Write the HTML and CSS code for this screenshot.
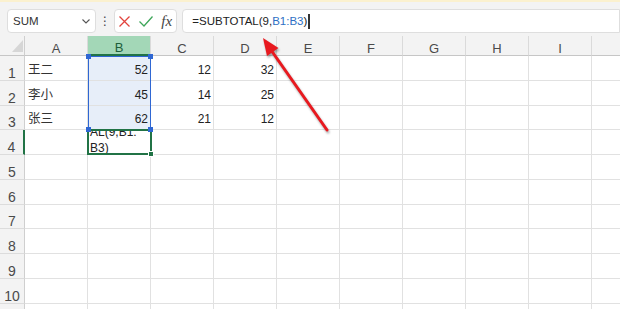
FILE: index.html
```html
<!DOCTYPE html>
<html lang="zh-CN">
<head>
    <meta charset="UTF-8">
    <meta name="viewport" content="width=device-width, initial-scale=1.0">
    <title>SUBTOTAL</title>
    <link rel="stylesheet" href="styles.css">
</head>
<body>

    <div class="app">
        <div class="notice"></div>

        <!-- 编辑栏 -->
        <div class="formula-bar">
            <div class="name-box">
                <span>SUM</span>
                <svg width="8" height="5" viewBox="0 0 8 5"><path d="M0.5 0.5 L4 4 L7.5 0.5" fill="none" stroke="#555" stroke-width="1.1"/></svg>
            </div>
            <div class="more">⋮</div>
            <div class="fx-box">
                <svg class="icon-cancel" width="11" height="11" viewBox="0 0 11 11"><path d="M0.5 0.5 L10.5 10.5 M10.5 0.5 L0.5 10.5" stroke="#e2433d" stroke-width="1.3"/></svg>
                <svg class="icon-ok" width="14" height="11" viewBox="0 0 14 11"><path d="M0.5 5.5 L5 10 L13.5 0.5" fill="none" stroke="#3ea65a" stroke-width="1.3"/></svg>
                <span class="fx">fx</span>
            </div>
            <div class="formula-input">=SUBTOTAL(9,<span class="ref">B1:B3</span>)<span class="caret"></span></div>
        </div>

        <!-- 工作表 -->
        <div class="sheet" id="sheet">
            <div class="corner">
                <svg width="11" height="12" viewBox="0 0 11 12"><polygon points="11,0 11,12 0,12" fill="#d6d6d6"/></svg>
            </div>
            <div class="range">
                <i class="handle tl"></i><i class="handle tr"></i>
                <i class="handle bl"></i><i class="handle br"></i>
            </div>
            <div class="active-cell">
                <div class="edit-text">AL(9,B1:<br>B3)</div>
                <i class="fill-handle"></i>
            </div>
        </div>

        <!-- 红色箭头 -->
        <svg class="arrow" width="620" height="309" viewBox="0 0 620 309">
            <line x1="327" y1="130" x2="271" y2="50" stroke="#e8191f" stroke-width="3" stroke-linecap="round"/>
            <polygon points="263,38 278.5,48 267,56" fill="#e8191f"/>
        </svg>
    </div>

    <script>
        // 最后一列只露出一部分，不显示列标
        const cols = ['A', 'B', 'C', 'D', 'E', 'F', 'G', 'H', 'I', ''];
        const data = {
            1: ['王二', 52, 12, 32],
            2: ['李小', 45, 14, 25],
            3: ['张三', 62, 21, 12]
        };
        const sheet = document.getElementById('sheet');

        // 按行列位置添加单元格
        function addCell(cls, text, row, col) {
            const el = document.createElement('div');
            el.className = cls;
            el.textContent = text;
            el.style.gridRow = row;
            el.style.gridColumn = col;
            sheet.appendChild(el);
        }

        cols.forEach((name, i) => {
            addCell(i === 1 ? 'col-head current' : 'col-head', name, 1, i + 2);
        });

        for (let r = 1; r <= 11; r++) {
            addCell(r === 4 ? 'row-head current' : 'row-head', r, r + 1, 1);
            for (let c = 0; c < cols.length; c++) {
                const value = data[r] ? data[r][c] : undefined;
                let cls = 'cell';
                if (typeof value === 'number') cls += ' num';
                if (c === 1 && r <= 3) cls += ' picked';
                addCell(cls, value === undefined ? '' : value, r + 1, c + 2);
            }
        }
    </script>

</body>
</html>
```

FILE: styles.css
```css
* {
    box-sizing: border-box;
}
body {
    margin: 0;
    font-family: "Liberation Sans", "Noto Sans CJK SC", sans-serif;
    color: #222;
    background: #fff;
}
.app {
    position: relative;
    width: 620px;
    height: 309px;
    overflow: hidden;
}
.notice {
    height: 2px;
    background: #fbf1cf;
}

/* 编辑栏 */
.formula-bar {
    display: flex;
    align-items: flex-start;
    height: 34px;
    padding: 7px 0 0 7px;
    background: #f3f3f3;
}
.name-box,
.fx-box,
.formula-input {
    height: 24px;
    background: #fff;
    border: 1px solid #dedede;
    border-radius: 4px;
    display: flex;
    align-items: center;
}
.name-box {
    width: 90px;
    justify-content: space-between;
    padding: 0 5px;
    font-size: 11.5px;
    color: #333;
}
.more {
    width: 19px;
    height: 24px;
    line-height: 24px;
    text-align: center;
    font-family: "DejaVu Sans", sans-serif;
    font-size: 12px;
    color: #444;
}
.fx-box {
    width: 64px;
    padding-left: 4px;
}
.icon-ok {
    margin-left: 9px;
}
.fx {
    margin-left: 8px;
    font-family: "Liberation Serif", serif;
    font-style: italic;
    font-size: 15px;
    color: #444;
}
.formula-input {
    width: 445px;
    margin-left: 5px;
    padding-left: 9px;
    font-size: 11.5px;
    color: #222;
    border-radius: 4px 0 0 4px;
}
.ref {
    color: #2e6fc4;
}
.caret {
    display: inline-block;
    width: 2px;
    height: 15px;
    margin-left: 1px;
    background: #333;
}

/* 工作表网格 */
.sheet {
    display: grid;
    grid-template-columns: 25px repeat(10, 63px);
    grid-template-rows: 20px repeat(11, 24.75px);
}
.corner {
    grid-row: 1;
    grid-column: 1;
    background: #f3f3f3;
    border-right: 1px solid #cfcfcf;
    border-bottom: 1px solid #c6c6c6;
    padding: 4px 0 0 12px;
}
.corner svg {
    display: block;
}
.col-head,
.row-head {
    display: flex;
    justify-content: center;
    align-items: flex-end;
    background: #f3f3f3;
    color: #4a4a4a;
}
.col-head {
    font-size: 13px;
    line-height: 13px;
    border-right: 1px solid #dadada;
    border-bottom: 1px solid #c6c6c6;
}
.col-head.current {
    background: #a3d7b7;
    color: #1e5e3a;
    border-bottom: 2px solid #217346;
    line-height: 12px;
}
.row-head {
    font-size: 14px;
    line-height: 14px;
    border-right: 1px solid #cfcfcf;
    border-bottom: 1px solid #dcdcdc;
}
.row-head.current {
    border-right: 2px solid #217346;
}
.cell {
    display: flex;
    align-items: flex-end;
    padding: 0 2px 3px 3px;
    font-size: 12.5px;
    line-height: 13px;
    border-right: 1px solid #e1e1e1;
    border-bottom: 1px solid #e1e1e1;
    white-space: nowrap;
    color: #333;
}
.num {
    justify-content: flex-end;
    font-size: 12px;
    color: #222;
}
.picked {
    background: #e7eef9;
}

/* 选区与活动单元格 */
.range {
    grid-row: 2 / 5;
    grid-column: 3;
    position: relative;
    border: 1px solid #2f67d3;
}
.handle {
    position: absolute;
    z-index: 4;
    width: 5px;
    height: 5px;
    background: #2f67d3;
}
.tl { top: -3px; left: -3px; }
.tr { top: -3px; right: -3px; }
.bl { bottom: -3px; left: -3px; }
.br { bottom: -3px; right: -3px; }

.active-cell {
    grid-row: 5;
    grid-column: 3;
    position: relative;
    z-index: 3;
    margin: -1px -1px 0 -1px;
    background: #fff;
    border: 2px solid #217346;
}
.edit-text {
    height: 100%;
    overflow: hidden;
    padding-left: 1px;
    font-size: 12px;
    line-height: 16px;
    color: #222;
}
.edit-text::before {
    content: "";
    display: block;
    margin-top: -7px;
}
.fill-handle {
    position: absolute;
    right: -4px;
    bottom: -4px;
    width: 6px;
    height: 6px;
    background: #217346;
    border: 1px solid #fff;
}

.arrow {
    position: absolute;
    top: 0;
    left: 0;
    z-index: 10;
    pointer-events: none;
    filter: drop-shadow(1px 2px 1px rgba(0, 0, 0, 0.35));
}
```
